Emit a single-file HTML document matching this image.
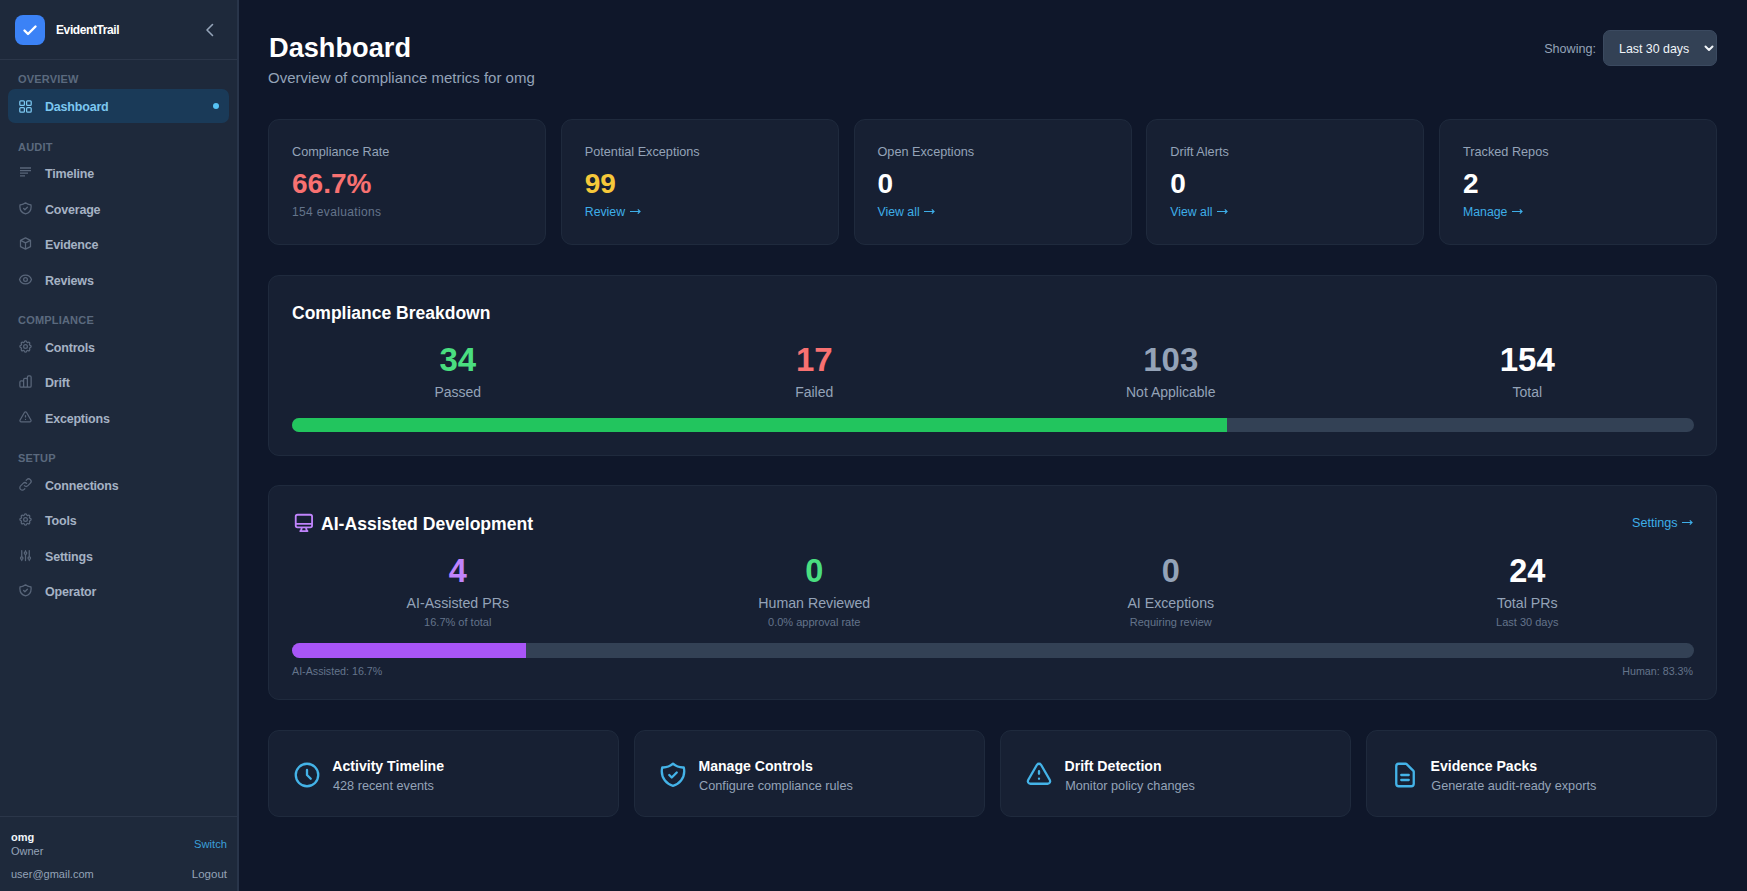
<!DOCTYPE html>
<html><head><meta charset="utf-8">
<style>
*{box-sizing:border-box;margin:0;padding:0}
html,body{width:1747px;height:891px;overflow:hidden;background:#0f172a;font-family:"Liberation Sans",sans-serif;color:#f1f5f9}
.abs{position:absolute}
#sb{position:absolute;left:0;top:0;width:239px;height:891px;background:#1e293b;border-right:2px solid #29354a}
#sbh{position:absolute;left:0;top:0;width:237px;height:60px;border-bottom:1px solid #2b3649}
.logo{position:absolute;left:15px;top:15px;width:30px;height:30px;border-radius:8px;background:#3b82f6}
.brand{position:absolute;left:56px;top:22px;line-height:16px;font-size:12px;font-weight:700;letter-spacing:-0.4px;color:#fff}
.lbl{position:absolute;left:18px;margin-top:0.7px;font-size:11px;font-weight:700;letter-spacing:0.2px;color:#5b697e;line-height:14px}
.nav{position:absolute;left:8px;width:222px;height:34px}
.nav .ic{position:absolute;left:10.3px;top:9.4px;width:15px;height:15px}
.nav .t{position:absolute;left:37px;top:9.7px;line-height:16px;font-size:12.5px;font-weight:700;color:#a5b2c4;letter-spacing:-0.2px}
.nav.on{background:#1a3a58;border-radius:7px;width:221px;height:33.5px;margin-top:0.4px}
.nav.on .t{color:#7cc7f0}
.dot{position:absolute;left:205px;top:14px;width:6px;height:6px;border-radius:3px;background:#56c2f4}
#sbf{position:absolute;left:0;top:816px;width:237px;height:75px;border-top:1px solid #2b3649}
#main{position:absolute;left:239px;top:0;width:1508px;height:891px}
.card{position:absolute;background:#172033;border:1px solid #1f2a3d;border-radius:11px}
.slate4{color:#94a3b8}
.slate5{color:#64748b}
</style></head><body>
<div id="sb">
  <div id="sbh">
    <div class="logo"><svg width="30" height="30" viewBox="0 0 30 30"><path d="M9.5 15.5l3.5 3.5 7.5-7.5" fill="none" stroke="#fff" stroke-width="2.4" stroke-linecap="round" stroke-linejoin="round"/></svg></div>
    <div class="brand">EvidentTrail</div>
    <svg class="abs" style="left:203px;top:22px" width="14" height="16" viewBox="0 0 14 16"><path d="M9.5 2.5L4 8l5.5 5.5" fill="none" stroke="#94a3b8" stroke-width="1.6" stroke-linecap="round" stroke-linejoin="round"/></svg>
  </div>
  <div class="lbl" style="top:71px">OVERVIEW</div>
  <div class="nav on" style="top:89px"><svg class="ic" viewBox="0 0 15 15" fill="none" stroke="#7cc7f0" stroke-width="1.25"><rect x="1.8" y="1.8" width="4.6" height="4.6" rx="1"/><rect x="8.6" y="1.8" width="4.6" height="4.6" rx="1"/><rect x="1.8" y="8.6" width="4.6" height="4.6" rx="1"/><rect x="8.6" y="8.6" width="4.6" height="4.6" rx="1"/></svg><div class="t">Dashboard</div><div class="dot"></div></div>
  <div class="lbl" style="top:139px">AUDIT</div>
  <div class="nav" style="top:156px"><svg class="ic" viewBox="0 0 15 15" fill="none" stroke="#59667a" stroke-width="1.3"><path d="M2 3h11M2 5.6h11M2 8.2h8M2 10.8h5"/></svg><div class="t">Timeline</div></div>
  <div class="nav" style="top:192px"><svg class="ic" viewBox="0 0 24 24" fill="none" stroke="#59667a" stroke-width="2" stroke-linecap="round" stroke-linejoin="round"><path d="M9 12l2 2 4-4m5.618-4.016A11.955 11.955 0 0112 2.944a11.955 11.955 0 01-8.618 3.04A12.02 12.02 0 003 9c0 5.591 3.824 10.29 9 11.622 5.176-1.332 9-6.03 9-11.622 0-1.042-.133-2.052-.382-3.016z"/></svg><div class="t">Coverage</div></div>
  <div class="nav" style="top:227px"><svg class="ic" viewBox="0 0 24 24" fill="none" stroke="#59667a" stroke-width="2" stroke-linecap="round" stroke-linejoin="round"><path d="M20 7l-8-4-8 4m16 0l-8 4m8-4v10l-8 4m0-10L4 7m8 4v10M4 7v10l8 4"/></svg><div class="t">Evidence</div></div>
  <div class="nav" style="top:263px"><svg class="ic" viewBox="0 0 24 24" fill="none" stroke="#59667a" stroke-width="2" stroke-linecap="round" stroke-linejoin="round"><path d="M15 12a3 3 0 11-6 0 3 3 0 016 0z"/><path d="M2.458 12C3.732 7.943 7.523 5 12 5c4.478 0 8.268 2.943 9.542 7-1.274 4.057-5.064 7-9.542 7-4.477 0-8.268-2.943-9.542-7z"/></svg><div class="t">Reviews</div></div>
  <div class="lbl" style="top:312px">COMPLIANCE</div>
  <div class="nav" style="top:330px"><svg class="ic" viewBox="0 0 24 24" fill="none" stroke="#59667a" stroke-width="2" stroke-linecap="round" stroke-linejoin="round"><path d="M10.325 4.317c.426-1.756 2.924-1.756 3.35 0a1.724 1.724 0 002.573 1.066c1.543-.94 3.31.826 2.37 2.37a1.724 1.724 0 001.065 2.572c1.756.426 1.756 2.924 0 3.35a1.724 1.724 0 00-1.066 2.573c.94 1.543-.826 3.31-2.37 2.37a1.724 1.724 0 00-2.572 1.065c-.426 1.756-2.924 1.756-3.35 0a1.724 1.724 0 00-2.573-1.066c-1.543.94-3.31-.826-2.37-2.37a1.724 1.724 0 00-1.065-2.572c-1.756-.426-1.756-2.924 0-3.35a1.724 1.724 0 001.066-2.573c-.94-1.543.826-3.31 2.37-2.37.996.608 2.296.07 2.572-1.065z"/><path d="M15 12a3 3 0 11-6 0 3 3 0 016 0z"/></svg><div class="t">Controls</div></div>
  <div class="nav" style="top:365px"><svg class="ic" viewBox="0 0 24 24" fill="none" stroke="#59667a" stroke-width="2" stroke-linecap="round" stroke-linejoin="round"><path d="M9 19v-6a2 2 0 00-2-2H5a2 2 0 00-2 2v6a2 2 0 002 2h2a2 2 0 002-2zm0 0V9a2 2 0 012-2h2a2 2 0 012 2v10m-6 0a2 2 0 002 2h2a2 2 0 002-2m0 0V5a2 2 0 012-2h2a2 2 0 012 2v14a2 2 0 01-2 2h-2a2 2 0 01-2-2z"/></svg><div class="t">Drift</div></div>
  <div class="nav" style="top:401px"><svg class="ic" viewBox="0 0 24 24" fill="none" stroke="#59667a" stroke-width="2" stroke-linecap="round" stroke-linejoin="round"><path d="M12 9v2m0 4h.01m-6.938 4h13.856c1.54 0 2.502-1.667 1.732-3L13.732 4c-.77-1.333-2.694-1.333-3.464 0L3.34 16c-.77 1.333.192 3 1.732 3z"/></svg><div class="t">Exceptions</div></div>
  <div class="lbl" style="top:450px">SETUP</div>
  <div class="nav" style="top:468px"><svg class="ic" viewBox="0 0 24 24" fill="none" stroke="#59667a" stroke-width="2" stroke-linecap="round" stroke-linejoin="round"><path d="M13.828 10.172a4 4 0 00-5.656 0l-4 4a4 4 0 105.656 5.656l1.102-1.101m-.758-4.899a4 4 0 005.656 0l4-4a4 4 0 00-5.656-5.656l-1.1 1.1"/></svg><div class="t">Connections</div></div>
  <div class="nav" style="top:503px"><svg class="ic" viewBox="0 0 24 24" fill="none" stroke="#59667a" stroke-width="2" stroke-linecap="round" stroke-linejoin="round"><path d="M10.325 4.317c.426-1.756 2.924-1.756 3.35 0a1.724 1.724 0 002.573 1.066c1.543-.94 3.31.826 2.37 2.37a1.724 1.724 0 001.065 2.572c1.756.426 1.756 2.924 0 3.35a1.724 1.724 0 00-1.066 2.573c.94 1.543-.826 3.31-2.37 2.37a1.724 1.724 0 00-2.572 1.065c-.426 1.756-2.924 1.756-3.35 0a1.724 1.724 0 00-2.573-1.066c-1.543.94-3.31-.826-2.37-2.37a1.724 1.724 0 00-1.065-2.572c-1.756-.426-1.756-2.924 0-3.35a1.724 1.724 0 001.066-2.573c-.94-1.543.826-3.31 2.37-2.37.996.608 2.296.07 2.572-1.065z"/><path d="M15 12a3 3 0 11-6 0 3 3 0 016 0z"/></svg><div class="t">Tools</div></div>
  <div class="nav" style="top:539px"><svg class="ic" viewBox="0 0 24 24" fill="none" stroke="#59667a" stroke-width="2" stroke-linecap="round" stroke-linejoin="round"><path d="M12 6V4m0 2a2 2 0 100 4m0-4a2 2 0 110 4m-6 8a2 2 0 100-4m0 4a2 2 0 110-4m0 4v2m0-6V4m6 6v10m6-2a2 2 0 100-4m0 4a2 2 0 110-4m0 4v2m0-6V4"/></svg><div class="t">Settings</div></div>
  <div class="nav" style="top:574px"><svg class="ic" viewBox="0 0 24 24" fill="none" stroke="#59667a" stroke-width="2" stroke-linecap="round" stroke-linejoin="round"><path d="M9 12l2 2 4-4m5.618-4.016A11.955 11.955 0 0112 2.944a11.955 11.955 0 01-8.618 3.04A12.02 12.02 0 003 9c0 5.591 3.824 10.29 9 11.622 5.176-1.332 9-6.03 9-11.622 0-1.042-.133-2.052-.382-3.016z"/></svg><div class="t">Operator</div></div>
  <div id="sbf">
    <div class="abs" style="left:11px;top:13px;font-size:11px;font-weight:700;line-height:14px;color:#f1f5f9">omg</div>
    <div class="abs slate4" style="left:11px;top:27px;font-size:11px;line-height:14px">Owner</div>
    <div class="abs slate4" style="left:11px;top:50px;font-size:11px;line-height:14px">user@gmail.com</div>
    <div class="abs" style="right:10px;top:20px;font-size:11.2px;line-height:14px;color:#3b9fd8">Switch</div>
    <div class="abs slate4" style="right:10px;top:50px;font-size:11.5px;line-height:14px">Logout</div>
  </div>
</div>
<div id="main">
  <div class="abs" style="left:30px;top:32px;font-size:27.2px;font-weight:700;line-height:32px;color:#fff">Dashboard</div>
  <div class="abs slate4" style="left:29px;top:69px;font-size:15px;line-height:18px">Overview of compliance metrics for omg</div>
  <div class="abs slate4" style="right:151px;top:40.5px;font-size:12.6px;line-height:16px">Showing:</div>
  <div class="abs" style="left:1364px;top:30px;width:114px;height:36px;background:#334155;border:1px solid #3b4a60;border-radius:7px">
    <div class="abs" style="left:15px;top:9.5px;font-size:12.4px;line-height:16px;color:#f1f5f9">Last 30 days</div>
    <svg class="abs" style="left:99px;top:13px" width="12" height="9" viewBox="0 0 12 9"><path d="M2.5 2.5L6 6l3.5-3.5" fill="none" stroke="#f1f5f9" stroke-width="2" stroke-linecap="round" stroke-linejoin="round"/></svg>
  </div>
  <div class="card" style="left:29.00px;top:119px;width:278px;height:126px">
    <div class="abs slate4" style="left:23px;top:24px;font-size:12.7px;line-height:16px">Compliance Rate</div>
    <div class="abs" style="left:23px;top:46.5px;font-size:28px;font-weight:700;line-height:34px;color:#f87171">66.7%</div>
    <div class="abs" style="left:23px;top:84px;font-size:12px;letter-spacing:0.35px;line-height:16px;color:#64748b">154 evaluations</div>
  </div>
  <div class="card" style="left:321.75px;top:119px;width:278px;height:126px">
    <div class="abs slate4" style="left:23px;top:24px;font-size:12.7px;line-height:16px">Potential Exceptions</div>
    <div class="abs" style="left:23px;top:46.5px;font-size:28px;font-weight:700;line-height:34px;color:#f6c83a">99</div>
    <div class="abs" style="left:23px;top:84px;font-size:12.3px;line-height:16px;color:#3eaee8">Review<svg style="display:inline-block;vertical-align:middle;margin-left:4.5px;margin-top:-2px" width="11" height="7" viewBox="0 0 11 7"><path d="M0 3.5h9.8M7.8 1.4l2.2 2.1-2.2 2.1" fill="none" stroke="currentColor" stroke-width="1.2"/></svg></div>
  </div>
  <div class="card" style="left:614.50px;top:119px;width:278px;height:126px">
    <div class="abs slate4" style="left:23px;top:24px;font-size:12.7px;line-height:16px">Open Exceptions</div>
    <div class="abs" style="left:23px;top:46.5px;font-size:28px;font-weight:700;line-height:34px;color:#ffffff">0</div>
    <div class="abs" style="left:23px;top:84px;font-size:12.3px;line-height:16px;color:#3eaee8">View all<svg style="display:inline-block;vertical-align:middle;margin-left:4.5px;margin-top:-2px" width="11" height="7" viewBox="0 0 11 7"><path d="M0 3.5h9.8M7.8 1.4l2.2 2.1-2.2 2.1" fill="none" stroke="currentColor" stroke-width="1.2"/></svg></div>
  </div>
  <div class="card" style="left:907.25px;top:119px;width:278px;height:126px">
    <div class="abs slate4" style="left:23px;top:24px;font-size:12.7px;line-height:16px">Drift Alerts</div>
    <div class="abs" style="left:23px;top:46.5px;font-size:28px;font-weight:700;line-height:34px;color:#ffffff">0</div>
    <div class="abs" style="left:23px;top:84px;font-size:12.3px;line-height:16px;color:#3eaee8">View all<svg style="display:inline-block;vertical-align:middle;margin-left:4.5px;margin-top:-2px" width="11" height="7" viewBox="0 0 11 7"><path d="M0 3.5h9.8M7.8 1.4l2.2 2.1-2.2 2.1" fill="none" stroke="currentColor" stroke-width="1.2"/></svg></div>
  </div>
  <div class="card" style="left:1200.00px;top:119px;width:278px;height:126px">
    <div class="abs slate4" style="left:23px;top:24px;font-size:12.7px;line-height:16px">Tracked Repos</div>
    <div class="abs" style="left:23px;top:46.5px;font-size:28px;font-weight:700;line-height:34px;color:#ffffff">2</div>
    <div class="abs" style="left:23px;top:84px;font-size:12.3px;line-height:16px;color:#3eaee8">Manage<svg style="display:inline-block;vertical-align:middle;margin-left:4.5px;margin-top:-2px" width="11" height="7" viewBox="0 0 11 7"><path d="M0 3.5h9.8M7.8 1.4l2.2 2.1-2.2 2.1" fill="none" stroke="currentColor" stroke-width="1.2"/></svg></div>
  </div>
  <div class="card" style="left:29px;top:274.5px;width:1449px;height:181px">
    <div class="abs" style="left:23px;top:27px;font-size:17.5px;font-weight:700;line-height:20px;color:#fff">Compliance Breakdown</div>
    <div class="abs" style="left:38.75px;top:64px;width:300px;text-align:center;font-size:33px;font-weight:700;line-height:40px;color:#4ade80">34</div>
    <div class="abs slate4" style="left:38.75px;top:108px;width:300px;text-align:center;font-size:14px;line-height:17px">Passed</div>
    <div class="abs" style="left:395.25px;top:64px;width:300px;text-align:center;font-size:33px;font-weight:700;line-height:40px;color:#f87171">17</div>
    <div class="abs slate4" style="left:395.25px;top:108px;width:300px;text-align:center;font-size:14px;line-height:17px">Failed</div>
    <div class="abs" style="left:751.75px;top:64px;width:300px;text-align:center;font-size:33px;font-weight:700;line-height:40px;color:#94a3b8">103</div>
    <div class="abs slate4" style="left:751.75px;top:108px;width:300px;text-align:center;font-size:14px;line-height:17px">Not Applicable</div>
    <div class="abs" style="left:1108.25px;top:64px;width:300px;text-align:center;font-size:33px;font-weight:700;line-height:40px;color:#ffffff">154</div>
    <div class="abs slate4" style="left:1108.25px;top:108px;width:300px;text-align:center;font-size:14px;line-height:17px">Total</div>
    <div class="abs" style="left:23px;top:142.3px;width:1402px;height:14.5px;border-radius:8px;background:#334155;overflow:hidden"><div style="width:66.7%;height:100%;background:#22c55e"></div></div>
  </div>
  <div class="card" style="left:29px;top:485px;width:1449px;height:214.5px">
    <svg class="abs" style="left:23.6px;top:25.9px" width="21.8" height="21.8" viewBox="0 0 24 24" fill="none" stroke="#c084fc" stroke-width="2" stroke-linecap="round" stroke-linejoin="round"><path d="M9.75 17L9 20l-1 1h8l-1-1-.75-3M3 13h18M5 17h14a2 2 0 002-2V5a2 2 0 00-2-2H5a2 2 0 00-2 2v10a2 2 0 002 2z"/></svg>
    <div class="abs" style="left:52px;top:28px;font-size:17.6px;font-weight:700;line-height:20px;color:#fff">AI-Assisted Development</div>
    <div class="abs" style="right:23px;top:29px;font-size:12.6px;line-height:16px;color:#3eaee8">Settings<svg style="display:inline-block;vertical-align:middle;margin-left:4.5px;margin-top:-2px" width="11" height="7" viewBox="0 0 11 7"><path d="M0 3.5h9.8M7.8 1.4l2.2 2.1-2.2 2.1" fill="none" stroke="currentColor" stroke-width="1.2"/></svg></div>
    <div class="abs" style="left:38.75px;top:65px;width:300px;text-align:center;font-size:32.5px;font-weight:700;line-height:40px;color:#c084fc">4</div>
    <div class="abs slate4" style="left:38.75px;top:109px;width:300px;text-align:center;font-size:14.2px;line-height:17px">AI-Assisted PRs</div>
    <div class="abs slate5" style="left:38.75px;top:129px;width:300px;text-align:center;font-size:11px;line-height:14px">16.7% of total</div>
    <div class="abs" style="left:395.25px;top:65px;width:300px;text-align:center;font-size:32.5px;font-weight:700;line-height:40px;color:#4ade80">0</div>
    <div class="abs slate4" style="left:395.25px;top:109px;width:300px;text-align:center;font-size:14.2px;line-height:17px">Human Reviewed</div>
    <div class="abs slate5" style="left:395.25px;top:129px;width:300px;text-align:center;font-size:11px;line-height:14px">0.0% approval rate</div>
    <div class="abs" style="left:751.75px;top:65px;width:300px;text-align:center;font-size:32.5px;font-weight:700;line-height:40px;color:#94a3b8">0</div>
    <div class="abs slate4" style="left:751.75px;top:109px;width:300px;text-align:center;font-size:14.2px;line-height:17px">AI Exceptions</div>
    <div class="abs slate5" style="left:751.75px;top:129px;width:300px;text-align:center;font-size:11px;line-height:14px">Requiring review</div>
    <div class="abs" style="left:1108.25px;top:65px;width:300px;text-align:center;font-size:32.5px;font-weight:700;line-height:40px;color:#ffffff">24</div>
    <div class="abs slate4" style="left:1108.25px;top:109px;width:300px;text-align:center;font-size:14.2px;line-height:17px">Total PRs</div>
    <div class="abs slate5" style="left:1108.25px;top:129px;width:300px;text-align:center;font-size:11px;line-height:14px">Last 30 days</div>
    <div class="abs" style="left:23px;top:157.2px;width:1402px;height:14.5px;border-radius:8px;background:#334155;overflow:hidden"><div style="width:16.7%;height:100%;background:#a855f7"></div></div>
    <div class="abs slate5" style="left:23px;top:178px;font-size:10.7px;line-height:14px">AI-Assisted: 16.7%</div>
    <div class="abs slate5" style="right:23px;top:178px;font-size:10.7px;line-height:14px">Human: 83.3%</div>
  </div>
  <div class="card" style="left:29.00px;top:729.5px;width:350.8px;height:87.5px">
    <svg class="abs" style="left:23px;top:29.3px" width="30" height="30" viewBox="0 0 24 24" fill="none" stroke="#44b3e8" stroke-width="1.85" stroke-linecap="round" stroke-linejoin="round"><path d="M12 8v4l3 3m6-3a9 9 0 11-18 0 9 9 0 0118 0z"/></svg>
    <div class="abs" style="left:63.3px;top:27px;font-size:14.1px;font-weight:700;line-height:17px;color:#fff">Activity Timeline</div>
    <div class="abs slate4" style="left:64px;top:47px;font-size:12.7px;line-height:16px">428 recent events</div>
  </div>
  <div class="card" style="left:395.10px;top:729.5px;width:350.8px;height:87.5px">
    <svg class="abs" style="left:23px;top:29.3px" width="30" height="30" viewBox="0 0 24 24" fill="none" stroke="#44b3e8" stroke-width="1.85" stroke-linecap="round" stroke-linejoin="round"><path d="M9 12l2 2 4-4m5.618-4.016A11.955 11.955 0 0112 2.944a11.955 11.955 0 01-8.618 3.04A12.02 12.02 0 003 9c0 5.591 3.824 10.29 9 11.622 5.176-1.332 9-6.03 9-11.622 0-1.042-.133-2.052-.382-3.016z"/></svg>
    <div class="abs" style="left:63.3px;top:27px;font-size:14.1px;font-weight:700;line-height:17px;color:#fff">Manage Controls</div>
    <div class="abs slate4" style="left:64px;top:47px;font-size:12.7px;line-height:16px">Configure compliance rules</div>
  </div>
  <div class="card" style="left:761.20px;top:729.5px;width:350.8px;height:87.5px">
    <svg class="abs" style="left:23px;top:29.3px" width="30" height="30" viewBox="0 0 24 24" fill="none" stroke="#44b3e8" stroke-width="1.85" stroke-linecap="round" stroke-linejoin="round"><path d="M12 9v2m0 4h.01m-6.938 4h13.856c1.54 0 2.502-1.667 1.732-3L13.732 4c-.77-1.333-2.694-1.333-3.464 0L3.34 16c-.77 1.333.192 3 1.732 3z"/></svg>
    <div class="abs" style="left:63.3px;top:27px;font-size:14.1px;font-weight:700;line-height:17px;color:#fff">Drift Detection</div>
    <div class="abs slate4" style="left:64px;top:47px;font-size:12.7px;line-height:16px">Monitor policy changes</div>
  </div>
  <div class="card" style="left:1127.30px;top:729.5px;width:350.8px;height:87.5px">
    <svg class="abs" style="left:23px;top:29.3px" width="30" height="30" viewBox="0 0 24 24" fill="none" stroke="#44b3e8" stroke-width="1.85" stroke-linecap="round" stroke-linejoin="round"><path d="M9 12h6m-6 4h6m2 5H7a2 2 0 01-2-2V5a2 2 0 012-2h5.586a1 1 0 01.707.293l5.414 5.414a1 1 0 01.293.707V19a2 2 0 01-2 2z"/></svg>
    <div class="abs" style="left:63.3px;top:27px;font-size:14.1px;font-weight:700;line-height:17px;color:#fff">Evidence Packs</div>
    <div class="abs slate4" style="left:64px;top:47px;font-size:12.7px;line-height:16px">Generate audit-ready exports</div>
  </div>
</div>
</body></html>
